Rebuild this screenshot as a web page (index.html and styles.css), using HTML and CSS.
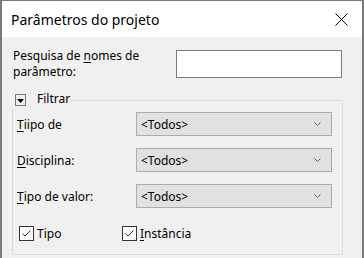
FILE: index.html
```html
<!DOCTYPE html>
<html lang="pt">
<head>
<meta charset="utf-8">
<link rel="stylesheet" href="styles.css">
</head>
<body>
<div class="window">
  <header class="titlebar">
    <span class="title">Parâmetros do projeto</span>
    <svg class="close" width="13" height="13" viewBox="0 0 13 13"><path d="M0.5 0.5 L12.5 12.5 M12.5 0.5 L0.5 12.5" stroke="#000" stroke-width="1" fill="none"/></svg>
  </header>
  <main class="content">
    <div class="search-row">
      <label class="search-label"><span class="ln">Pesquisa de <u>n</u>omes de</span><span class="ln">parâmetro:</span></label>
      <div class="textbox"></div>
    </div>
    <section class="group">
      <div class="legend">
        <svg class="expander" width="11" height="12" viewBox="0 0 11 12"><rect x="0.5" y="0.5" width="10" height="11" fill="none" stroke="#000" stroke-width="1" stroke-dasharray="1 1"/><path d="M2 5 H9 L5.5 9 Z" fill="#000"/></svg>
        <span>Filtrar</span>
      </div>
      <div class="rows">
        <span class="lbl"><u>T</u>iipo de</span>
        <div class="select"><span>&lt;Todos&gt;</span><svg class="chev" width="7" height="4" viewBox="0 0 7 4"><path d="M0.5 0.5 L3.5 3.5 L6.5 0.5" stroke="#606060" stroke-width="1" fill="none"/></svg></div>
        <span class="lbl"><u>D</u>isciplina:</span>
        <div class="select"><span>&lt;Todos&gt;</span><svg class="chev" width="7" height="4" viewBox="0 0 7 4"><path d="M0.5 0.5 L3.5 3.5 L6.5 0.5" stroke="#606060" stroke-width="1" fill="none"/></svg></div>
        <span class="lbl"><u>T</u>ipo de valor:</span>
        <div class="select"><span>&lt;Todos&gt;</span><svg class="chev" width="7" height="4" viewBox="0 0 7 4"><path d="M0.5 0.5 L3.5 3.5 L6.5 0.5" stroke="#606060" stroke-width="1" fill="none"/></svg></div>
      </div>
      <div class="checks">
        <label class="check check-first"><span class="box"><svg width="13" height="13" viewBox="0 0 13 13"><path d="M2.5 6.5 L5 9 L10.5 3.5" stroke="#333" stroke-width="1" fill="none"/></svg></span>Tipo</label>
        <label class="check"><span class="box"><svg width="13" height="13" viewBox="0 0 13 13"><path d="M2.5 6.5 L5 9 L10.5 3.5" stroke="#333" stroke-width="1" fill="none"/></svg></span><span><u>I</u>nstância</span></label>
      </div>
    </section>
  </main>
</div>
</body>
</html>
```
FILE: styles.css
```css
html, body {
  margin: 0;
  padding: 0;
  overflow: hidden;
  background: #f0f0f0;
}
.window {
  width: 364px;
  height: 258px;
  box-sizing: border-box;
  border-style: solid;
  border-color: #7a7a7a;
  border-width: 1px 2px 0 2px;
  background: #f0f0f0;
  display: flex;
  flex-direction: column;
  font-family: "Noto Sans", "Open Sans", sans-serif;
  font-size: 12px;
  color: #000;
}
.titlebar {
  height: 36px;
  flex: none;
  background: #fff;
  display: flex;
  align-items: center;
  justify-content: space-between;
  padding: 0 14px 0 9px;
}
.title {
  font-size: 14px;
  line-height: 18px;
  margin-top: 1px;
}
.close {
  display: block;
  margin-top: 1px;
}
.content {
  padding: 13px 20px 0 11px;
}
.search-row {
  display: flex;
  align-items: flex-start;
  justify-content: space-between;
}
.search-label {
  width: 150px;
  line-height: 16px;
  margin-top: -2px;
  display: flex;
  flex-direction: column;
}
.ln {
  display: block;
  white-space: nowrap;
}
.search-label u, .lbl u, .check u {
  text-decoration-thickness: 1px;
  text-underline-offset: 2px;
}
.textbox {
  width: 166px;
  height: 28px;
  box-sizing: border-box;
  border: 1px solid #7a7a7a;
  background: #fff;
}
.group {
  margin: 20px -1px 0 -1px;
  border: 1px solid #dcdcdc;
  padding: 0 9px 13px 0;
}
.legend {
  display: flex;
  align-items: flex-start;
  gap: 11px;
  width: fit-content;
  height: 16px;
  margin: -9px 0 0 -2px;
  padding: 2px 1px 0 4px;
  box-sizing: border-box;
  background: #f0f0f0;
  line-height: 16px;
}
.legend span {
  margin-top: -3px;
}
.expander {
  display: block;
  flex: none;
}
.rows {
  margin-top: 4px;
  display: grid;
  grid-template-columns: 123px 196px;
  grid-auto-rows: 24px;
  row-gap: 12px;
  align-items: center;
}
.lbl {
  padding-left: 4px;
  line-height: 15px;
}
.select {
  height: 24px;
  box-sizing: border-box;
  border: 1px solid #adadad;
  background: #e1e1e1;
  display: flex;
  align-items: center;
  justify-content: space-between;
  padding: 0 10px 0 4px;
  line-height: 15px;
}
.chev {
  display: block;
}
.checks {
  margin-top: 18px;
  display: flex;
  padding-left: 6px;
  height: 15px;
  align-items: center;
}
.check {
  display: flex;
  align-items: center;
  gap: 3px;
  line-height: 15px;
}
.check-first {
  width: 103px;
}
.box {
  width: 15px;
  height: 15px;
  box-sizing: border-box;
  border: 1px solid #333;
  background: #fff;
  display: flex;
  align-items: center;
  justify-content: center;
  flex: none;
}
.box svg {
  display: block;
}
```
